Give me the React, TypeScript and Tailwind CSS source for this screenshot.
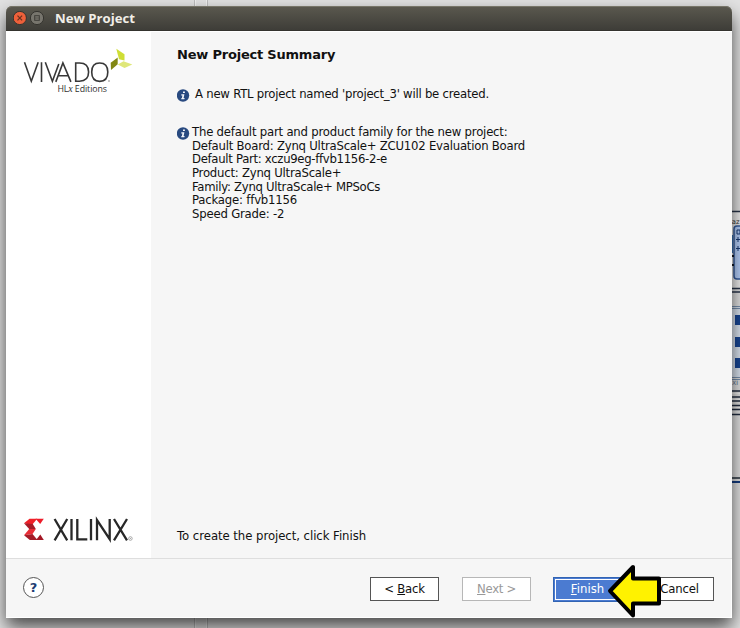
import React from "react";

function InfoIcon({ className = "" }: { className?: string }) {
  return (
    <svg className={`h-[13px] w-[13px] shrink-0 ${className}`} viewBox="0 0 13 13">
      <circle cx="6" cy="6.5" r="6.2" fill="#294a80" />
      <path d="M6 2.4h1.9v1.7H6zM4.4 5.2h3L6.6 9h1l-.2 1.2H4.2L4.4 9h.5l.5-2.5h-1.2z" fill="#f4f6fa" />
    </svg>
  );
}

function VivadoLogo() {
  return (
    <svg className="ml-[17px] mt-[16px] h-[50px] w-[112px]" viewBox="0 0 112 50">
      <g fill="none" stroke="#383838" strokeWidth="1.6">
        <path d="M1.5 15.3 8.3 34.2 15.2 15.3M18.5 15.3V34.9M22.3 15.3 29.4 34.2 35.8 17M32.8 34.9 39.9 16 47.9 34.9M35.5 28.8H45.2" />
        <path d="M52.7 16V34.2H56.5C63 34.2 65.6 31 65.6 25.1S63 16 56.5 16ZM76.7 16C71.2 16 68.7 19.2 68.7 25.1S71.2 34.4 76.7 34.4 84.8 31 84.8 25.1 82.2 16 76.7 16Z" />
      </g>
      <circle cx="86" cy="34" r=".7" fill="#606060" />
      <path d="M93.3 1.8 101.5 7.2V13.6L96 12.3Z" fill="#cfde35" />
      <path d="M87.7 15.7 94.7 10.5V17.3L88 23Z" fill="#818713" />
      <path d="M94.8 17.5 100.5 14.3 109.3 17.4 101.5 21Z" fill="#dfe779" />
      <text x="34.4" y="45.2" fontSize="8.8" fill="#303030" textLength="49.6" fontFamily="Open Sans, sans-serif">
        HL<tspan fontSize="10" fontStyle="italic" fontFamily="Liberation Serif, serif">x</tspan> Editions
      </text>
    </svg>
  );
}

function XilinxLogo() {
  return (
    <svg className="mb-[14px] ml-[17px] h-[28px] w-[112px]" viewBox="0 0 112 28">
      <path d="M6.5 2.8H14.2L9.8 8H4.5L1 7.3Z" fill="#ef2028" />
      <path d="M1 7.3 9.8 8 12.8 13H6.2Z" fill="#a71c28" />
      <path d="M6.2 13H12.8L9.5 18.1 1 19.2Z" fill="#e82c35" />
      <path d="M1 19.2 9.5 18.1 14.5 24H6.8Z" fill="#a51c28" />
      <path d="M12.6 2.8H20.8L17.2 8Z" fill="#ed1c29" />
      <path d="M13 24 17.3 18.6 20.8 24Z" fill="#a31724" />
      <path d="M31.6 3 44.2 24.3M44.2 3 31.6 24.3M48.5 3V24.3M54.3 3V23.3H64.3M68 3V24.3M74 24.3V4L86.7 23.2V3M91 3 104 24.3M104 3 91 24.3" fill="none" stroke="#282828" strokeWidth="2.3" />
      <circle cx="107.4" cy="22.5" r="1.8" fill="none" stroke="#888" strokeWidth=".7" />
      <circle cx="107.4" cy="22.5" r=".6" fill="#999" />
    </svg>
  );
}

function Backdrop() {
  return (
    <div className="absolute inset-0 bg-[#e2e2e2]">
      <svg className="h-full w-full" viewBox="0 0 740 628">
        <path d="M194.5 0V628M207.5 0V628" stroke="#bdbdbd" />
        <path d="M195.5 0V628M206.5 0V628" stroke="#f1f1f1" />
        <rect x="730" y="212" width="10" height="77" fill="#eeeeee" />
        <path d="M728 211.5H740M728 288.5H740M728 292H740" stroke="#283449" strokeWidth="1.5" />
        <text x="727.5" y="223.5" fontSize="7" fill="#333" textLength="12" lengthAdjust="spacingAndGlyphs" fontFamily="DejaVu Sans">daz</text>
        <rect x="734" y="226" width="20" height="53" rx="3" fill="#b5cffa" stroke="#355c9f" strokeWidth="1.5" />
        <path d="M736 239.5H740M738 237V242M736 248.5H740M738 246V251M737 230H740V234H737Z" fill="none" stroke="#183b75" />
        <path d="M731 235V253" stroke="#3c75b8" strokeWidth="4" />
        <path d="M731 256H734M731 265H734" stroke="#151c29" strokeWidth="2" />
        <rect x="730" y="307" width="10" height="70" fill="#dae3ef" />
        <path d="M730 306.5H740M730 308.5H740M730 377.5H740M730 379.5H740" stroke="#7890ae" />
        <path d="M735 315H740V325H735ZM735 337H740V347H735ZM735 358H740V368H735Z" fill="#174594" />
        <text x="732" y="385" fontSize="6" fill="#60718b" textLength="6" lengthAdjust="spacingAndGlyphs" fontFamily="DejaVu Sans">XI</text>
        <path d="M730 391H740M730 397H740M730 401H740M730 405.5H740M730 409.5H740M730 414.5H740" stroke="#222d40" strokeWidth="1.5" />
        <path d="M730 393.5H740M730 399.5H740M730 407.5H740" stroke="#f0f0f0" />
        <path d="M730 478H740" stroke="#202c39" strokeWidth="1.5" />
        <path d="M730 482H740" stroke="#133c80" strokeWidth="2" />
      </svg>
    </div>
  );
}

export default function App() {
  return (
    <div className="relative h-[628px] w-[740px] overflow-hidden font-['DejaVu_Sans',sans-serif] text-[11.7px] text-[#111]">
      <Backdrop />
      <div className="relative ml-[6px] flex h-[618px] w-[726px] flex-col pt-[6px]">
        <div className="flex min-h-0 flex-1 flex-col rounded-t-[6px] bg-[#f6f6f6] shadow-[0_9px_18px_rgba(0,0,0,0.68)]">
          <header className="flex h-[25px] shrink-0 items-center rounded-t-[6px] border-b border-[#34332e] bg-gradient-to-b from-[#5b594f] to-[#3e3d38] pl-[7px] shadow-[inset_0_1px_0_#777568]">
            <svg className="mt-px h-[15px] w-[33px]" viewBox="0 0 33 15">
              <circle cx="6.8" cy="7" r="6.6" fill="#ee603a" stroke="#35342f" />
              <path d="m4.5 4.7 4.6 4.6m0-4.6L4.5 9.3" stroke="#66301f" strokeWidth="1.2" />
              <circle cx="24" cy="7" r="6.6" fill="#77756d" stroke="#35342f" />
              <rect x="21.7" y="4.7" width="4.6" height="4.6" fill="none" stroke="#3d3c37" />
              <path d="M21.7 7H26.3" stroke="#4b4942" strokeWidth=".7" />
            </svg>
            <h1 className="ml-[9px] font-['Open_Sans',sans-serif] text-[13.2px] font-bold leading-[18px] text-[#f1eee7]">New Project</h1>
          </header>
          <main className="flex h-[527px] shrink-0">
            <aside className="flex w-[145px] flex-col justify-between bg-white">
              <VivadoLogo />
              <XilinxLogo />
            </aside>
            <section className="flex flex-1 flex-col border-t border-white pl-[26px] pt-[14px]">
              <h2 className="text-[13px] font-bold leading-[18px] tracking-[-0.21px]">New Project Summary</h2>
              <div className="mt-[23px] flex h-[14px] items-center">
                <InfoIcon className="mt-[2px]" />
                <p className="ml-[5px] leading-[14px] tracking-[-0.24px]">A new RTL project named 'project_3' will be created.</p>
              </div>
              <div className="mt-[24px] flex items-start">
                <InfoIcon className="mt-[2px]" />
                <div className="ml-[2px] pt-px leading-[13.65px] tracking-[-0.23px]">
                  <p className="tracking-[-0.21px]">The default part and product family for the new project:</p>
                  <p>Default Board: Zynq UltraScale+ ZCU102 Evaluation Board</p>
                  <p className="tracking-[-0.31px]">Default Part: xczu9eg-ffvb1156-2-e</p>
                  <p>Product: Zynq UltraScale+</p>
                  <p className="tracking-[-0.29px]">Family: Zynq UltraScale+ MPSoCs</p>
                  <p className="tracking-[-0.2px]">Package: ffvb1156</p>
                  <p className="tracking-[-0.2px]">Speed Grade: -2</p>
                </div>
              </div>
              <p className="mb-[15px] mt-auto leading-[14px] tracking-[-0.05px]">To create the project, click Finish</p>
            </section>
          </main>
          <footer className="relative flex flex-1 items-start border-t border-[#dedede] pl-[17px] pt-[18px] shadow-[inset_-1px_-1px_0_#ffffff]">
            <button className="flex h-[21px] w-[21px] items-center justify-center rounded-full border border-[#555] bg-white text-[13px] font-bold text-[#203d73]">?</button>
            <button className="ml-[326px] h-[24px] w-[69px] border border-[#555] bg-white pt-px tracking-[-0.2px]">&lt; <u>B</u>ack</button>
            <button className="ml-[23px] h-[24px] w-[69px] border border-[#b7b7b7] bg-white pt-px tracking-[-0.3px] text-[#999]"><u>N</u>ext &gt;</button>
            <button className="ml-[22px] h-[25px] w-[69px] border border-[#3264b3] bg-[#4b7bd1] text-white shadow-[inset_0_0_0_1px_#4b7bd1,inset_0_0_0_2px_#ffffff]"><u>F</u>inish</button>
            <button className="ml-[23px] h-[24px] w-[69px] border border-[#555] bg-white pt-px tracking-[-0.15px]">Cancel</button>
            <svg className="absolute left-[600px] top-[4px] h-[58px] w-[58px]" viewBox="0 0 58 58">
              <path d="M4 28 27 4V15.5H53V40.5H27V52.5Z" fill="#fff200" stroke="#000" strokeWidth="4" strokeLinejoin="round" />
            </svg>
          </footer>
        </div>
      </div>
    </div>
  );
}
